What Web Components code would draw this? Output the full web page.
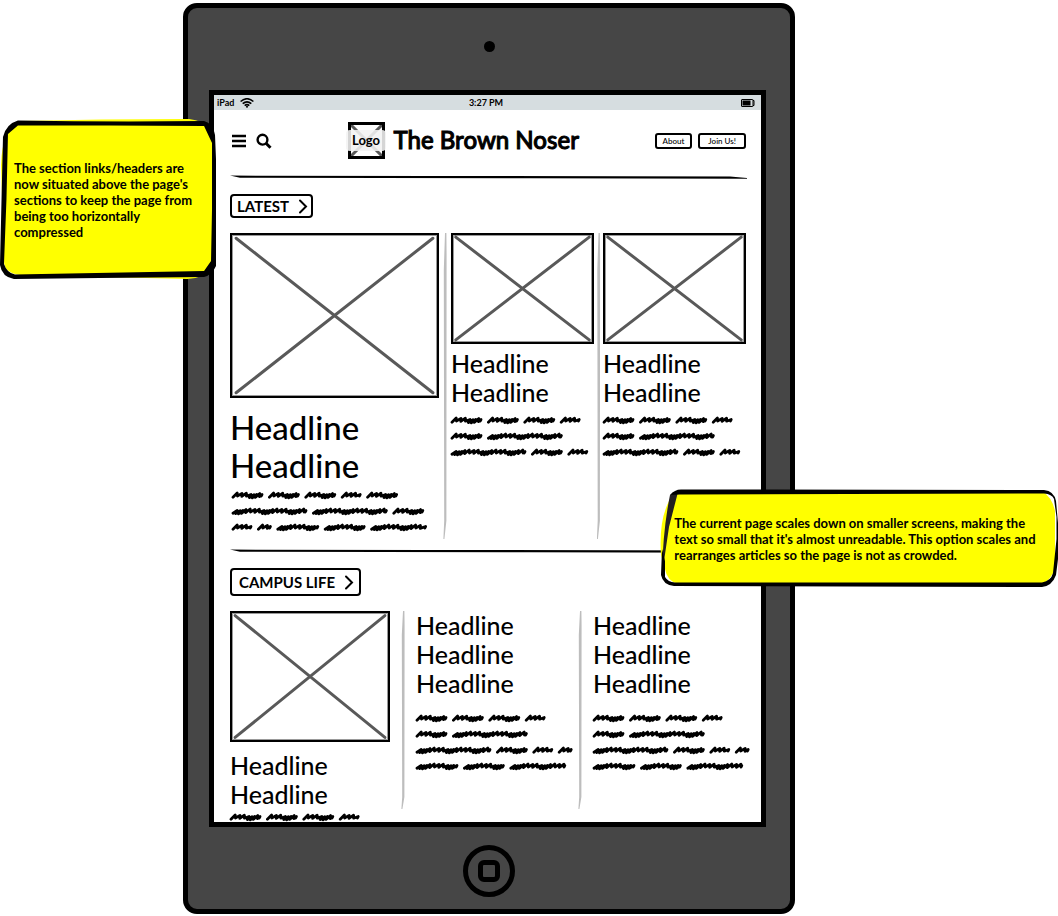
<!DOCTYPE html>
<html lang="en">
<head>
<meta charset="utf-8">
<meta name="viewport" content="width=device-width, initial-scale=1">
<title>The Brown Noser – tablet wireframe</title>
<style>
  body { margin: 0; background: #fff; color: #000; font-family: Lato, "Open Sans", sans-serif; font-weight: 500; }
</style>
</head>
<body>
<wire-board></wire-board>

<script>
const define = (name, html, setup) => {
  const template = document.createElement('template');
  template.innerHTML = html;
  customElements.define(name, class extends HTMLElement {
    constructor() {
      super();
      this.attachShadow({ mode: 'open' }).append(template.content.cloneNode(true));
    }
    connectedCallback() { if (setup) setup(this, this.shadowRoot); }
  });
};

/* Box with a cross: stands for a picture */
define('wire-image', `
  <style>
    :host { display: block; box-sizing: border-box; border: 2px solid #000; outline: 1px solid rgba(0,0,0,.4); outline-offset: -3px; }
    svg { display: block; width: 100%; height: 100%; }
    line { stroke: #595959; stroke-width: 3; stroke-linecap: round; vector-effect: non-scaling-stroke; }
  </style>
  <svg viewBox="0 0 100 100" preserveAspectRatio="none" role="img" aria-label="Picture">
    <line x1="2" y1="2" x2="98" y2="98"/><line x1="98" y1="2" x2="2" y2="98"/>
  </svg>`);

/* Hand-drawn filler text: each line is a list of word widths */
define('wire-scribble', `
  <style>
    :host { display: block; }
    svg { display: block; overflow: visible; height: 16px; width: 100%; }
    path { fill: none; stroke: #000; stroke-width: 2.8; stroke-linecap: round; stroke-linejoin: round; }
  </style>`, (el, root) => {
  const steps = [[4.8, -.8], [4.4, -.4], [4.6, -.6], [3, .7], [2.8, 1], [3, .6], [4.2, -.2]];
  for (const row of el.getAttribute('lines').split('/')) {
    let x = 0, d = '';
    for (const w of row.trim().split(/\s+/).map(Number)) {
      const end = x + w - 1;
      let p = x + 1;
      d += `M${p.toFixed(1)} 10.2`;
      for (let i = w > 31 ? 3 : 0; p < end - 5; i++) {
        const [step, drop] = steps[i % 7];
        d += `L${(p + 4.2).toFixed(1)} ${(6.8 + drop).toFixed(1)}L${(p + step - .4).toFixed(1)} ${(9.8 + drop).toFixed(1)}`;
        p += step;
      }
      d += `L${end.toFixed(1)} 7.5L${(end - .8).toFixed(1)} 9`;
      x += w + 5.4;
    }
    root.innerHTML += `<svg aria-hidden="true"><path d="${d}"/></svg>`;
  }
});

define('wire-rule', `
  <style>:host { display: block; height: 4px; } svg { display: block; width: 100%; height: 100%; overflow: visible; }</style>
  <svg viewBox="0 0 516 4" preserveAspectRatio="none" aria-hidden="true"><path d="M0 .6L200 .9 500 1.5 517 3V3.8L300 3.3 10 2.7Z"/></svg>`);

define('wire-divider', `
  <style>:host { display: block; width: 4px; justify-self: center; background: #bdbdbd;
    clip-path: polygon(50% 0, 85% 0, 90% 7%, 85% 94%, 35% 100%, 10% 100%, 30% 94%, 20% 12%); }</style>`);

define('section-link', `
  <style>
    :host { display: block; }
    button { display: flex; align-items: center; gap: 9px; box-sizing: border-box; height: 24px; padding: 0 3px 0 5px;
      border: 2px solid #000; border-radius: 4px; background: #fff; color: #000; font: 700 15px/16px Lato, sans-serif; }
    :host([large]) button { height: 28px; padding: 0 5px 0 7px; }
    svg { width: 10px; height: 16px; }
    path { fill: none; stroke: #000; stroke-width: 2; stroke-linecap: round; }
  </style>
  <button type="button"><slot></slot><svg viewBox="0 0 10 16" aria-hidden="true"><path d="M2 2.500L8 8.500 2 14.500"/></svg></button>`);

define('story-card', `
  <style>
    :host { display: block; min-width: 0; }
    h3 { margin: 0; font-weight: 500; font-size: 25px; line-height: 29px; }
    :host([lead]) h3 { font-size: 33px; line-height: 38px; }
    ::slotted(wire-image) { margin-bottom: 5px; }
    ::slotted(wire-scribble) { margin-top: 5px; }
    :host([lead]) ::slotted(wire-image) { margin-bottom: 10px; }
    :host([lead]) ::slotted(wire-scribble) { margin: 3px 0 0 2px; }
    :host([roomy]) ::slotted(wire-image) { margin-bottom: 9px; }
    :host([roomy]) ::slotted(wire-scribble) { margin-top: 0; }
    :host([brief]) ::slotted(wire-scribble) { margin-top: 12px; }
  </style>
  <article><slot name="picture"></slot><h3><slot></slot></h3><slot name="text"></slot></article>`);

define('status-bar', `
  <style>
    :host { display: grid; grid-template-columns: 1fr auto 1fr; align-items: center; height: 15px; padding: 0 6px 0 3px;
      background: #d6dde0; font-size: 9px; line-height: 12px; font-weight: 700; }
    .net { display: flex; align-items: center; gap: 6px; }
    svg { display: block; }
    .bat { justify-self: end; }
  </style>
  <span class="net">iPad
    <svg width="14" height="10" viewBox="0 0 14 10" fill="none" stroke="#000" stroke-width="1.6" role="img" aria-label="Wi-Fi">
      <path d="M.6 3.500Q7-2 13.400 3.500M2.700 5.600Q7 2 11.300 5.600M4.700 7.600Q7 5.600 9.300 7.600"/><circle cx="7" cy="8.800" r="1" fill="#000" stroke="none"/></svg>
  </span>
  <span>3:27 PM</span>
  <svg class="bat" width="14" height="8" viewBox="0 0 14 8" role="img" aria-label="Battery">
    <rect x=".5" y=".5" width="11.500" height="7" rx=".5" fill="none" stroke="#000"/><rect x="1.500" y="1.500" width="8" height="5"/><path d="M12 1.500H13V6.500H12" fill="none" stroke="#000"/></svg>`);

define('site-header', `
  <style>
    :host { display: flex; align-items: center; justify-content: space-between; padding: 12px 0 16px; }
    div { display: flex; align-items: center; }
    button { border: 0; padding: 0; background: none; color: #000; font: inherit; }
    svg { display: block; }
    .tools { gap: 10px; padding-left: 2px; }
    .brand { gap: 9px; }
    .logo { position: relative; justify-content: center; width: 37px; height: 37px; }
    .logo wire-image { position: absolute; inset: 0; border-width: 3px; }
    .logo span { position: relative; flex: none; padding: 2px 6px; border-radius: 4px; background: rgba(242,242,242,.88); font-size: 13px; line-height: 17px; font-weight: 700; }
    h1 { margin: 0; font-weight: 500; font-size: 24px; line-height: 32px; padding-bottom: 2px; -webkit-text-stroke: 1px #000; }
    .links { gap: 6px; }
    .links button { height: 16px; padding: 0 6px; border: 2px solid #000; border-radius: 3px; background: #fff; font-size: 8px; line-height: 10px; font-weight: 500; }
    .links button + button { padding: 0 8px; }
  </style>
  <div class="tools">
    <button type="button" aria-label="Menu"><svg width="14" height="14" viewBox="0 0 14 14" stroke="#000" stroke-width="2.400"><path d="M0 2H14M0 7H14M0 12H14"/></svg></button>
    <button type="button" aria-label="Search"><svg width="16" height="16" viewBox="0 0 16 16" fill="none" stroke="#000" stroke-width="2.400"><circle cx="6.500" cy="6.700" r="4.900"/><path d="M10 10.200L14.500 14.700" stroke-width="3"/></svg></button>
  </div>
  <div class="brand"><div class="logo"><wire-image></wire-image><span>Logo</span></div><h1>The Brown Noser</h1></div>
  <div class="links"><button type="button">About</button><button type="button">Join Us!</button></div>`);

define('news-page', `
  <style>
    :host { display: block; padding: 0 15px 0 16px; }
    section-link { margin: 15px 0; }
    .latest, .campus { display: grid; }
    .latest { grid-template-columns: 209fr 12px 143fr 9px 143fr; margin-bottom: 10px; }
    .campus { grid-template-columns: 160fr 26px 151fr 26px 153fr; }
    .latest wire-divider { margin-bottom: -4px; }
    .campus wire-divider { margin-bottom: 16px; }
    .big { aspect-ratio: 209 / 165; }
    .mid { aspect-ratio: 143 / 111; }
    .wide { aspect-ratio: 160 / 131; }
    section { padding-bottom: 4px; }
  </style>
  <site-header></site-header>
  <wire-rule></wire-rule>
  <section>
    <section-link>LATEST</section-link>
    <div class="latest">
      <story-card lead><wire-image slot="picture" class="big"></wire-image>Headline<br>Headline<wire-scribble slot="text" lines="31 31 31 20 31/75 75 31/20 14 42 41 56"></wire-scribble></story-card>
      <wire-divider></wire-divider>
      <story-card><wire-image slot="picture" class="mid"></wire-image>Headline<br>Headline<wire-scribble slot="text" lines="31 31 31 20/31 75/75 31 20"></wire-scribble></story-card>
      <wire-divider></wire-divider>
      <story-card><wire-image slot="picture" class="mid"></wire-image>Headline<br>Headline<wire-scribble slot="text" lines="31 31 31 20/31 75/75 31 20"></wire-scribble></story-card>
    </div>
  </section>
  <wire-rule></wire-rule>
  <section>
    <section-link large>CAMPUS LIFE</section-link>
    <div class="campus">
      <story-card roomy><wire-image slot="picture" class="wide"></wire-image>Headline<br>Headline<wire-scribble slot="text" lines="31 31 31 20"></wire-scribble></story-card>
      <wire-divider></wire-divider>
      <story-card brief>Headline<br>Headline<br>Headline<wire-scribble slot="text" lines="31 31 31 20/31 75/75 31 20 14/42 41 56"></wire-scribble></story-card>
      <wire-divider></wire-divider>
      <story-card brief>Headline<br>Headline<br>Headline<wire-scribble slot="text" lines="31 31 31 20/31 75/75 31 20 14/42 41 56"></wire-scribble></story-card>
    </div>
  </section>`);

define('tablet-frame', `
  <style>
    :host { display: block; box-sizing: border-box; border: 5px solid #000; border-radius: 14px; background: #464646; padding: 0 24px 0 21px; }
    .bezel { display: flex; align-items: center; justify-content: center; height: 82px; padding-left: 3px; }
    .camera { width: 11px; height: 11px; margin-bottom: 6px; border-radius: 50%; background: #000; }
    .screen { border: 5px solid #000; background: #fff; aspect-ratio: 547 / 727; overflow: hidden; }
    .home { display: grid; place-items: center; box-sizing: border-box; width: 52px; height: 52px; margin-top: 6px; padding: 0; border: 5px solid #000; border-radius: 50%; background: none; }
    .home span { box-sizing: border-box; width: 22px; height: 22px; border: 5px solid #000; border-radius: 6px; }
  </style>
  <div class="bezel"><span class="camera"></span></div>
  <div class="screen"><slot></slot></div>
  <div class="bezel"><button class="home" type="button" aria-label="Home"><span></span></button></div>`);

/* Marker-outlined yellow annotation */
define('sticky-note', `
  <style>
    :host { display: flex; align-items: center; box-sizing: border-box; font-size: 13px; line-height: 16px; font-weight: 700; }
    svg { position: absolute; inset: 0; width: 100%; height: 100%; overflow: visible; display: none; }
    :host([shape="square"]) .square, :host([shape="wide"]) .wide { display: block; }
    p { position: relative; margin: 0; }
  </style>
  <svg class="square" viewBox="0 0 217 160" preserveAspectRatio="none" aria-hidden="true">
    <path fill="#fff" d="M3 140L15 158 40 157 10 120Z"/>
    <path fill="#ff0" d="M20 2Q100 0 190 0 204 2 210 8L215 30 213 148Q204 160 188 160L20 156Q4 154 4 142L1 46Q2 10 20 2Z"/>
    <path d="M18 1.500Q110 3 205 2 214 4 216 16L217 40V147Q213 156 205 158L100 159 14 160Q2 158 0 146L3 18Q6 5 18 1.500ZM18 6.500L8 15 6.500 80 4 145Q7 154 15 155.500L205 152 212 142 213 90 213 24 205 7 110 6.500Z"/>
  </svg>
  <svg class="wide" viewBox="0 0 398 98" preserveAspectRatio="none" aria-hidden="true">
    <path fill="#fff" d="M380 2L397 12V40H380ZM2 70L3 92 20 96V70Z"/>
    <path fill="#ff0" d="M16 2H382Q392 8 395 22V80Q390 92 382 95H18Q7 92 5 80L1 66Q-2 22 16 2Z"/>
    <path fill="#231f20" d="M10 6L18 3 9 38 4 72 2 84Q3 40 10 6Z"/>
    <path d="M10 6Q15 0 22 .500L384 1Q394 2 396 12L398 34V70L396 86Q392 97 382 98L14 97Q3 96 1 86L2 60 5 72 5 88Q8 93 15 93.500H382Q391 92 393 84L396.500 50V28L394 10Q392 5 384 4.500L20 5.500Z"/>
  </svg>
  <p><slot></slot></p>`);

/* Canvas: the tablet with notes pinned over its edges */
define('wire-board', `
  <style>
    :host { display: grid; grid-template-columns: 183fr 612fr 263fr; padding-top: 3px; overflow: hidden; }
    .mock { grid-column: 2; position: relative; min-width: 0; }
    sticky-note { position: absolute; }
    .left { top: 116px; right: calc(100% - 33px); width: 216px; height: 160px; padding: 2px 10px 0 14px; }
    .right { top: 486px; left: 78%; width: 398px; height: 98px; padding: 2px 12px 0 14px; }
  </style>
  <div class="mock">
    <tablet-frame><status-bar></status-bar><news-page></news-page></tablet-frame>
    <sticky-note class="left" shape="square">The section links/headers are now situated above the page's sections to keep the page from being too horizontally compressed</sticky-note>
    <sticky-note class="right" shape="wide">The current page scales down on smaller screens, making the text so small that it's almost unreadable. This option scales and rearranges articles so the page is not as crowded.</sticky-note>
  </div>`);
</script>
</body>
</html>
